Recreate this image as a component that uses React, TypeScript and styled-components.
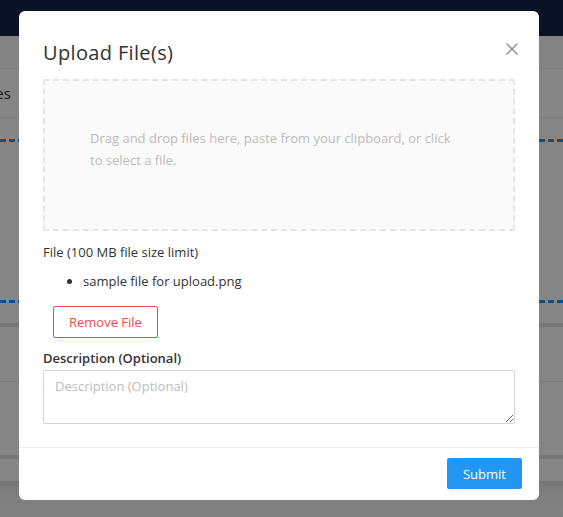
import React from 'react';
import styled, { createGlobalStyle } from 'styled-components';

const GlobalStyle = createGlobalStyle`
  html, body {
    margin: 0;
    padding: 0;
    height: 100%;
    overflow: hidden;
  }
  body {
    font-family: "Segoe UI", "Open Sans", "Noto Sans", sans-serif;
    background: #ffffff;
    color: #333333;
  }
`;

// --- page behind the dialog ---
const Page = styled.div`
  display: flex;
  flex-direction: column;
  width: 563px;
  height: 517px;
  background: #ffffff;
`;

const Header = styled.div`
  height: 36px;
  background: #12244a;
  flex-shrink: 0;
`;

const Toolbar = styled.div`
  height: 32px;
  background: #fbfbfb;
  border-bottom: 1px solid #e8e8e8;
  flex-shrink: 0;
`;

const Tabs = styled.div`
  height: 48px;
  display: flex;
  align-items: center;
  border-bottom: 1px solid #eeeeee;
  font-size: 15px;
  color: #333;
  flex-shrink: 0;
`;

const Tab = styled.span`
  margin-left: -20px;
`;

const DropArea = styled.div`
  margin-top: 21px;
  height: 158px;
  border-top: 3px dashed #2491ef;
  border-bottom: 3px dashed #2491ef;
  flex-shrink: 0;
`;

const Rule = styled.div<{ thick?: boolean; gap: number }>`
  margin-top: ${(p) => p.gap}px;
  height: ${(p) => (p.thick ? 4 : 1)}px;
  background: ${(p) => (p.thick ? '#e4e4e4' : '#ececec')};
  flex-shrink: 0;
`;

const PageFooter = styled.div`
  margin-top: 22px;
  flex: 1;
  background: linear-gradient(#e0e0e0, #f4f4f4 12px, #f8f8f8);
`;

// --- dialog ---
const Overlay = styled.div`
  position: fixed;
  inset: 0;
  background: rgba(0, 0, 0, 0.48);
`;

const Dialog = styled.div`
  position: absolute;
  left: 19px;
  top: 11px;
  width: 520px;
  height: 489px;
  background: #ffffff;
  border-radius: 6px;
  display: flex;
  flex-direction: column;
  box-sizing: border-box;
`;

const Body = styled.div`
  padding: 28px 24px 23px;
  border-bottom: 1px solid #ececec;
  display: flex;
  flex-direction: column;
`;

const Title = styled.h2`
  margin: 0 0 12px;
  font-size: 20px;
  line-height: 28px;
  font-weight: 400;
  letter-spacing: 0.35px;
  color: #333333;
`;

const CloseButton = styled.button`
  position: absolute;
  top: 31px;
  right: 20px;
  width: 14px;
  height: 14px;
  padding: 0;
  border: none;
  background: none;
  display: flex;
  cursor: pointer;
`;

const Dropzone = styled.div`
  height: 152px;
  box-sizing: border-box;
  padding: 46px 56px 46px 45px;
  background: #fafafa;
  border: 2px dashed #e6e6e6;
  border-radius: 2px;
  font-size: 13px;
  line-height: 22px;
  color: #bcbcbc;
`;

const Label = styled.div<{ weight: number; gap: number }>`
  margin-top: ${(p) => p.gap}px;
  font-size: 13px;
  line-height: 20px;
  font-weight: ${(p) => p.weight};
  color: #333333;
`;

const FileList = styled.ul`
  margin: 9px 0 0;
  padding-left: 40px;
  font-size: 13px;
  line-height: 20px;
  color: #333333;
`;

const RemoveButton = styled.button`
  align-self: flex-start;
  margin: 15px 0 0 10px;
  height: 32px;
  padding: 0 15px;
  background: #ffffff;
  border: 1px solid #f2474f;
  border-radius: 2px;
  color: #f2474f;
  font-family: inherit;
  font-size: 13px;
`;

const TextArea = styled.textarea`
  margin-top: 2px;
  height: 54px;
  box-sizing: border-box;
  padding: 5px 11px;
  border: 1px solid #d4d4d4;
  border-radius: 2px;
  font-family: inherit;
  font-size: 13px;
  line-height: 20px;
  color: #333;
  resize: vertical;
  &::placeholder {
    color: #bdbdbd;
  }
`;

const Footer = styled.div`
  flex: 1;
  display: flex;
  justify-content: flex-end;
  align-items: flex-start;
  padding: 10px 17px;
`;

const SubmitButton = styled.button`
  height: 31px;
  width: 75px;
  background: #2196f3;
  border: none;
  border-radius: 2px;
  color: #ffffff;
  font-family: inherit;
  font-size: 13px;
`;

const CloseIcon = () => (
  <svg width="14" height="14" viewBox="0 0 14 14">
    <path d="M1.5 1.5 L12.5 12.5 M12.5 1.5 L1.5 12.5" stroke="#8a8a8a" strokeWidth="1.3" fill="none" />
  </svg>
);

const App = () => {
  return (
    <>
      <GlobalStyle />
      <Page>
        <Header />
        <Toolbar />
        <Tabs>
          <Tab>Files</Tab>
        </Tabs>
        <DropArea />
        <Rule thick gap={20} />
        <Rule gap={54} />
        <Rule thick gap={73} />
        <PageFooter />
      </Page>
      <Overlay>
        <Dialog>
          <CloseButton aria-label="Close">
            <CloseIcon />
          </CloseButton>
          <Body>
            <Title>Upload File(s)</Title>
            <Dropzone>Drag and drop files here, paste from your clipboard, or click to select a file.</Dropzone>
            <Label weight={500} gap={11}>File (100 MB file size limit)</Label>
            <FileList>
              <li>sample file for upload.png</li>
            </FileList>
            <RemoveButton>Remove File</RemoveButton>
            <Label weight={600} gap={10}>Description (Optional)</Label>
            <TextArea placeholder="Description (Optional)" />
          </Body>
          <Footer>
            <SubmitButton>Submit</SubmitButton>
          </Footer>
        </Dialog>
      </Overlay>
    </>
  );
};

export default App;
